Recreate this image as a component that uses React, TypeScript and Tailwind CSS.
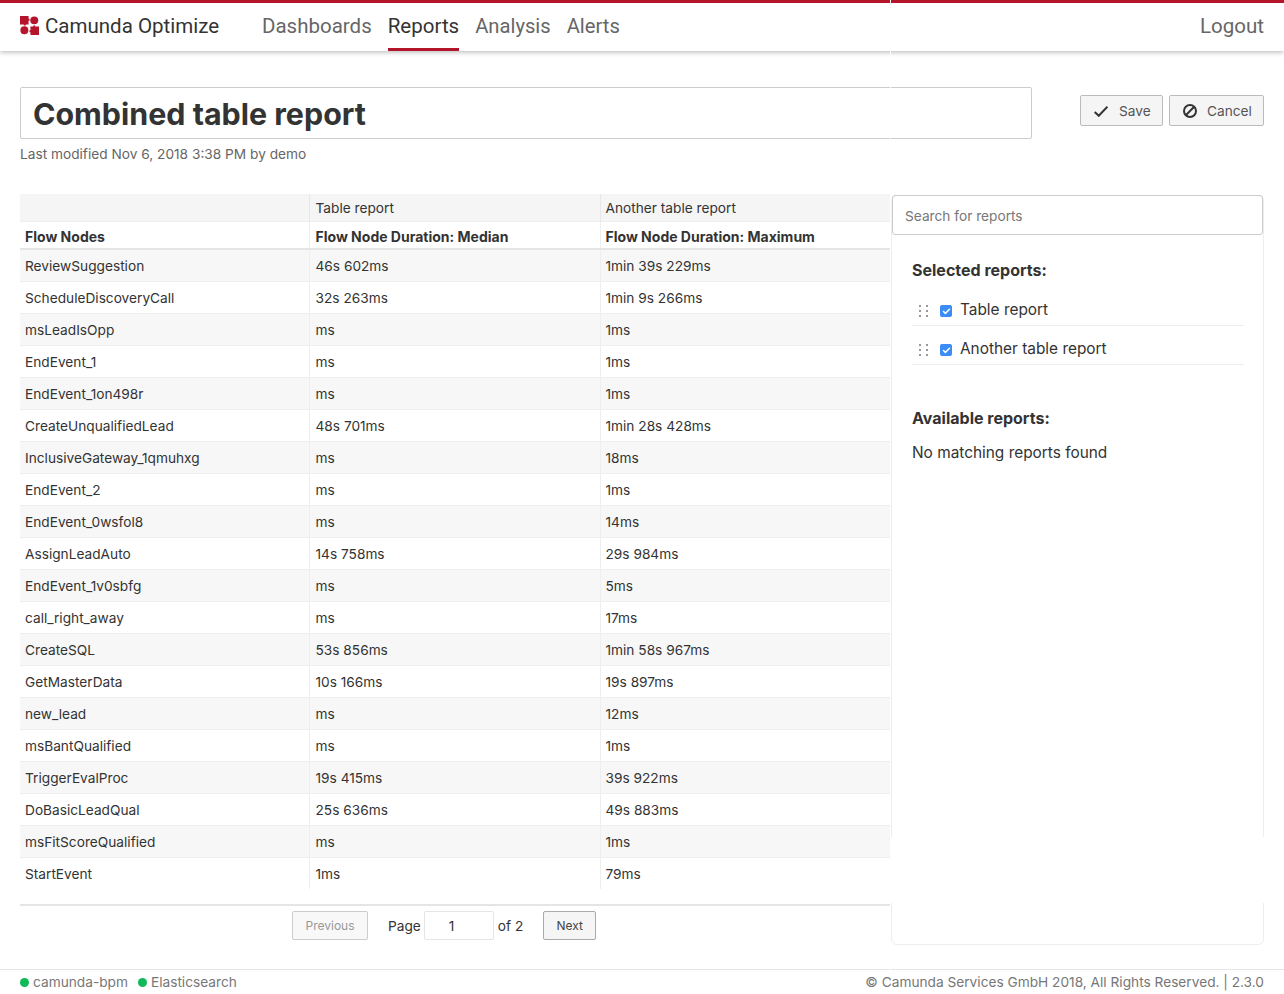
import { Check } from 'lucide-react'

const rows = [
  ['ReviewSuggestion', '46s 602ms', '1min 39s 229ms'],
  ['ScheduleDiscoveryCall', '32s 263ms', '1min 9s 266ms'],
  ['msLeadIsOpp', 'ms', '1ms'],
  ['EndEvent_1', 'ms', '1ms'],
  ['EndEvent_1on498r', 'ms', '1ms'],
  ['CreateUnqualifiedLead', '48s 701ms', '1min 28s 428ms'],
  ['InclusiveGateway_1qmuhxg', 'ms', '18ms'],
  ['EndEvent_2', 'ms', '1ms'],
  ['EndEvent_0wsfol8', 'ms', '14ms'],
  ['AssignLeadAuto', '14s 758ms', '29s 984ms'],
  ['EndEvent_1v0sbfg', 'ms', '5ms'],
  ['call_right_away', 'ms', '17ms'],
  ['CreateSQL', '53s 856ms', '1min 58s 967ms'],
  ['GetMasterData', '10s 166ms', '19s 897ms'],
  ['new_lead', 'ms', '12ms'],
  ['msBantQualified', 'ms', '1ms'],
  ['TriggerEvalProc', '19s 415ms', '39s 922ms'],
  ['DoBasicLeadQual', '25s 636ms', '49s 883ms'],
  ['msFitScoreQualified', 'ms', '1ms'],
  ['StartEvent', '1ms', '79ms'],
]

function Logo() {
  return (
    <svg width="19" height="19" viewBox="0 0 20 20" className="shrink-0 -mt-[2px]">
      <path d="M0 0h9v3h1v2H9v4H6v1H4V9H0z" fill="#b5152b" />
      <path d="M11 11h3v-1h2v1h4v9h-9v-3h-1v-2h1z" fill="#b5152b" />
      <circle cx="15" cy="4.6" r="4.2" fill="#b5152b" />
      <circle cx="4.6" cy="15" r="4.2" fill="#b5152b" />
    </svg>
  )
}

function DragHandle() {
  return (
    <span className="grid grid-cols-2 gap-x-[5px] gap-y-[3px] w-[9px] mt-[1px]">
      {[0, 1, 2, 3, 4, 5].map((i) => (
        <span key={i} className="w-[2px] h-[2px] bg-[#999]" />
      ))}
    </span>
  )
}

function SelectedReport({ name }: { name: string }) {
  return (
    <div className="flex items-center h-[39px] border-b border-[#eee] pl-[7px] pt-[8px]">
      <DragHandle />
      <span className="ml-[12px] w-[12px] h-[12px] mt-[2px] rounded-[2px] bg-[#3b8cf5] flex items-center justify-center">
        <Check size={9} strokeWidth={4} className="text-white" />
      </span>
      <span className="ml-[8px] text-[15.4px] text-[#333]">{name}</span>
    </div>
  )
}

export default function App() {
  return (
    <div className="relative w-[1284px] h-[994px] overflow-hidden bg-white flex flex-col text-[#333] font-['Inter',sans-serif]">
      {/* Header */}
      <header className="h-[51px] shrink-0 border-t-[3px] border-[#b5152b] bg-white shadow-[0_1px_5px_rgba(0,0,0,0.3)] flex items-stretch pl-[20px] pr-[20px] font-['Roboto',sans-serif] text-[20.5px] z-10">
        <div className="flex items-center gap-[6px] text-[#333] w-[242px] pb-[1px]">
          <Logo />
          <span>Camunda Optimize</span>
        </div>
        <nav className="flex gap-[16px] text-[#666]">
          <a className="flex items-center pt-[2px] border-b-[3px] border-transparent">Dashboards</a>
          <a className="flex items-center pt-[2px] text-[#333] border-b-[3px] border-[#b5152b]">Reports</a>
          <a className="flex items-center pt-[2px] border-b-[3px] border-transparent text-[20.2px]">Analysis</a>
          <a className="flex items-center pt-[2px] border-b-[3px] border-transparent text-[20.2px]">Alerts</a>
        </nav>
        <a className="ml-auto flex items-center pt-[2px] border-b-[3px] border-transparent text-[#666]">Logout</a>
      </header>

      <main className="flex-1 min-h-0 flex flex-col px-[20px] pt-[36px]">
        {/* Title row */}
        <div className="flex items-start">
          <div className="w-[1012px]">
            <div className="h-[52px] border border-[#ccc] rounded-[2px] flex items-center pl-[12px] pt-[4px] text-[30.4px] font-bold text-[#333]">
              Combined table report
            </div>
            <div className="mt-[5px] text-[13.7px] leading-[20px] text-[#666]">Last modified Nov 6, 2018 3:38 PM by demo</div>
          </div>
          <div className="ml-auto mt-[8px] flex gap-[6px]">
            <button className="h-[31px] w-[83px] flex items-center pl-[13px] pt-[1px] gap-[11px] border border-[#bbb] rounded-[2px] bg-[#f5f5f5] text-[13.7px] text-[#555]">
              <svg width="14" height="11" viewBox="0 0 14 11" fill="none" className="shrink-0">
                <path d="M0.7 6 L4.8 9.8 L13.4 0.8" stroke="#333" strokeWidth="2" />
              </svg>
              Save
            </button>
            <button className="h-[31px] w-[95px] flex items-center pl-[13px] pt-[1px] gap-[10px] border border-[#bbb] rounded-[2px] bg-[#f5f5f5] text-[13.7px] text-[#555]">
              <svg width="14" height="14" viewBox="0 0 14 14" fill="none" className="shrink-0">
                <circle cx="7" cy="7" r="6" stroke="#333" strokeWidth="2" />
                <path d="M2.8 11.2 L11.2 2.8" stroke="#333" strokeWidth="2" />
              </svg>
              Cancel
            </button>
          </div>
        </div>

        {/* Table and report panel */}
        <div className="flex flex-1 min-h-0 mt-[30px]">
          <div className="w-[870px]">
            <table className="w-full table-fixed border-collapse text-[13.7px] leading-[20px]">
              <colgroup>
                <col className="w-[289px]" />
                <col className="w-[291px]" />
                <col className="w-[290px]" />
              </colgroup>
              <thead>
                <tr className="h-[27px] bg-[#f5f5f5] border-b border-[#eee]">
                  <th className="px-[5px] pt-[2px] font-normal text-left" />
                  <th className="pl-[6px] pr-[5px] pt-[2px] font-normal text-left border-l border-[#e8e8e8]">Table report</th>
                  <th className="px-[5px] pt-[2px] font-normal text-left border-l border-[#e8e8e8]">Another table report</th>
                </tr>
                <tr className="h-[28px] border-b-2 border-[#e5e5e5] text-[14px]">
                  <th className="px-[5px] pt-[4px] font-bold text-left">Flow Nodes</th>
                  <th className="pl-[6px] pr-[5px] pt-[4px] font-bold text-left border-l border-[#eee]">Flow Node Duration: Median</th>
                  <th className="px-[5px] pt-[4px] font-bold text-left border-l border-[#eee]">Flow Node Duration: Maximum</th>
                </tr>
              </thead>
              <tbody>
                {rows.map((r, i) => (
                  <tr key={r[0]} className={`h-[32px] ${i < rows.length - 1 ? 'border-b border-[#eee]' : ''} ${i % 2 === 0 ? 'bg-[#f7f7f7]' : 'bg-white'}`}>
                    <td className="px-[5px] pt-[2px]">{r[0]}</td>
                    <td className="pl-[6px] pr-[5px] pt-[2px] border-l border-[#eee]">{r[1]}</td>
                    <td className="px-[5px] pt-[2px] border-l border-[#eee]">{r[2]}</td>
                  </tr>
                ))}
              </tbody>
            </table>
            <div className="mt-[15px] border-t-2 border-[#e5e5e5] pt-[5px] pl-[272px] flex items-center text-[13.7px]">
              <button className="w-[76px] h-[29px] border border-[#ccc] rounded-[2px] bg-[#f8f8f8] text-[12px] text-[#999]">Previous</button>
              <span className="ml-[20px] pt-[1px]">Page</span>
              <span className="ml-[3px] w-[70px] h-[29px] border border-[#e5e5e5] rounded-[2px] flex items-center pl-[24px] pt-[1px]">1</span>
              <span className="ml-[4px] pt-[1px]">of 2</span>
              <button className="ml-[20px] w-[53px] h-[29px] border border-[#aaa] rounded-[2px] bg-[#f5f5f5] text-[12px] text-[#444]">Next</button>
            </div>
          </div>

          <aside className="ml-[1px] mt-[1px] w-[373px] h-[750px] border border-[#eee] rounded-[6px] flex flex-col">
            <div className="-mt-px h-[40px] border border-[#ccc] rounded-[3px] flex items-center pl-[12px] pt-[2px] text-[13.7px] text-[#777]">
              Search for reports
            </div>
            <div className="pl-[20px] pr-[19px] pt-[23px]">
              <h2 className="text-[16px] leading-[24px] font-bold">Selected reports:</h2>
              <div className="mt-[5px]">
                <SelectedReport name="Table report" />
                <SelectedReport name="Another table report" />
              </div>
              <h2 className="mt-[41px] text-[16px] leading-[24px] font-bold">Available reports:</h2>
              <p className="mt-[11px] text-[15.4px] leading-[24px]">No matching reports found</p>
            </div>
          </aside>
        </div>
      </main>

      {/* Footer */}
      <footer className="h-[25px] shrink-0 border-t border-[#e5e5e5] flex items-center px-[20px] text-[13.7px] text-[#777]">
        <span className="w-[9px] h-[9px] rounded-full bg-[#10b957]" />
        <span className="ml-[4px]">camunda-bpm</span>
        <span className="ml-[10px] w-[9px] h-[9px] rounded-full bg-[#10b957]" />
        <span className="ml-[4px]">Elasticsearch</span>
        <span className="ml-auto">© Camunda Services GmbH 2018, All Rights Reserved. | 2.3.0</span>
      </footer>

      {/* seams left by the stitched capture */}
      <div className="absolute left-[890px] top-0 w-px h-[194px] bg-white z-20" />
      <div className="absolute left-[890px] top-[969px] w-px h-px bg-white z-20" />
      <div className="absolute left-[891px] top-[837px] w-[373px] h-[66px] bg-white z-20" />
    </div>
  )
}
